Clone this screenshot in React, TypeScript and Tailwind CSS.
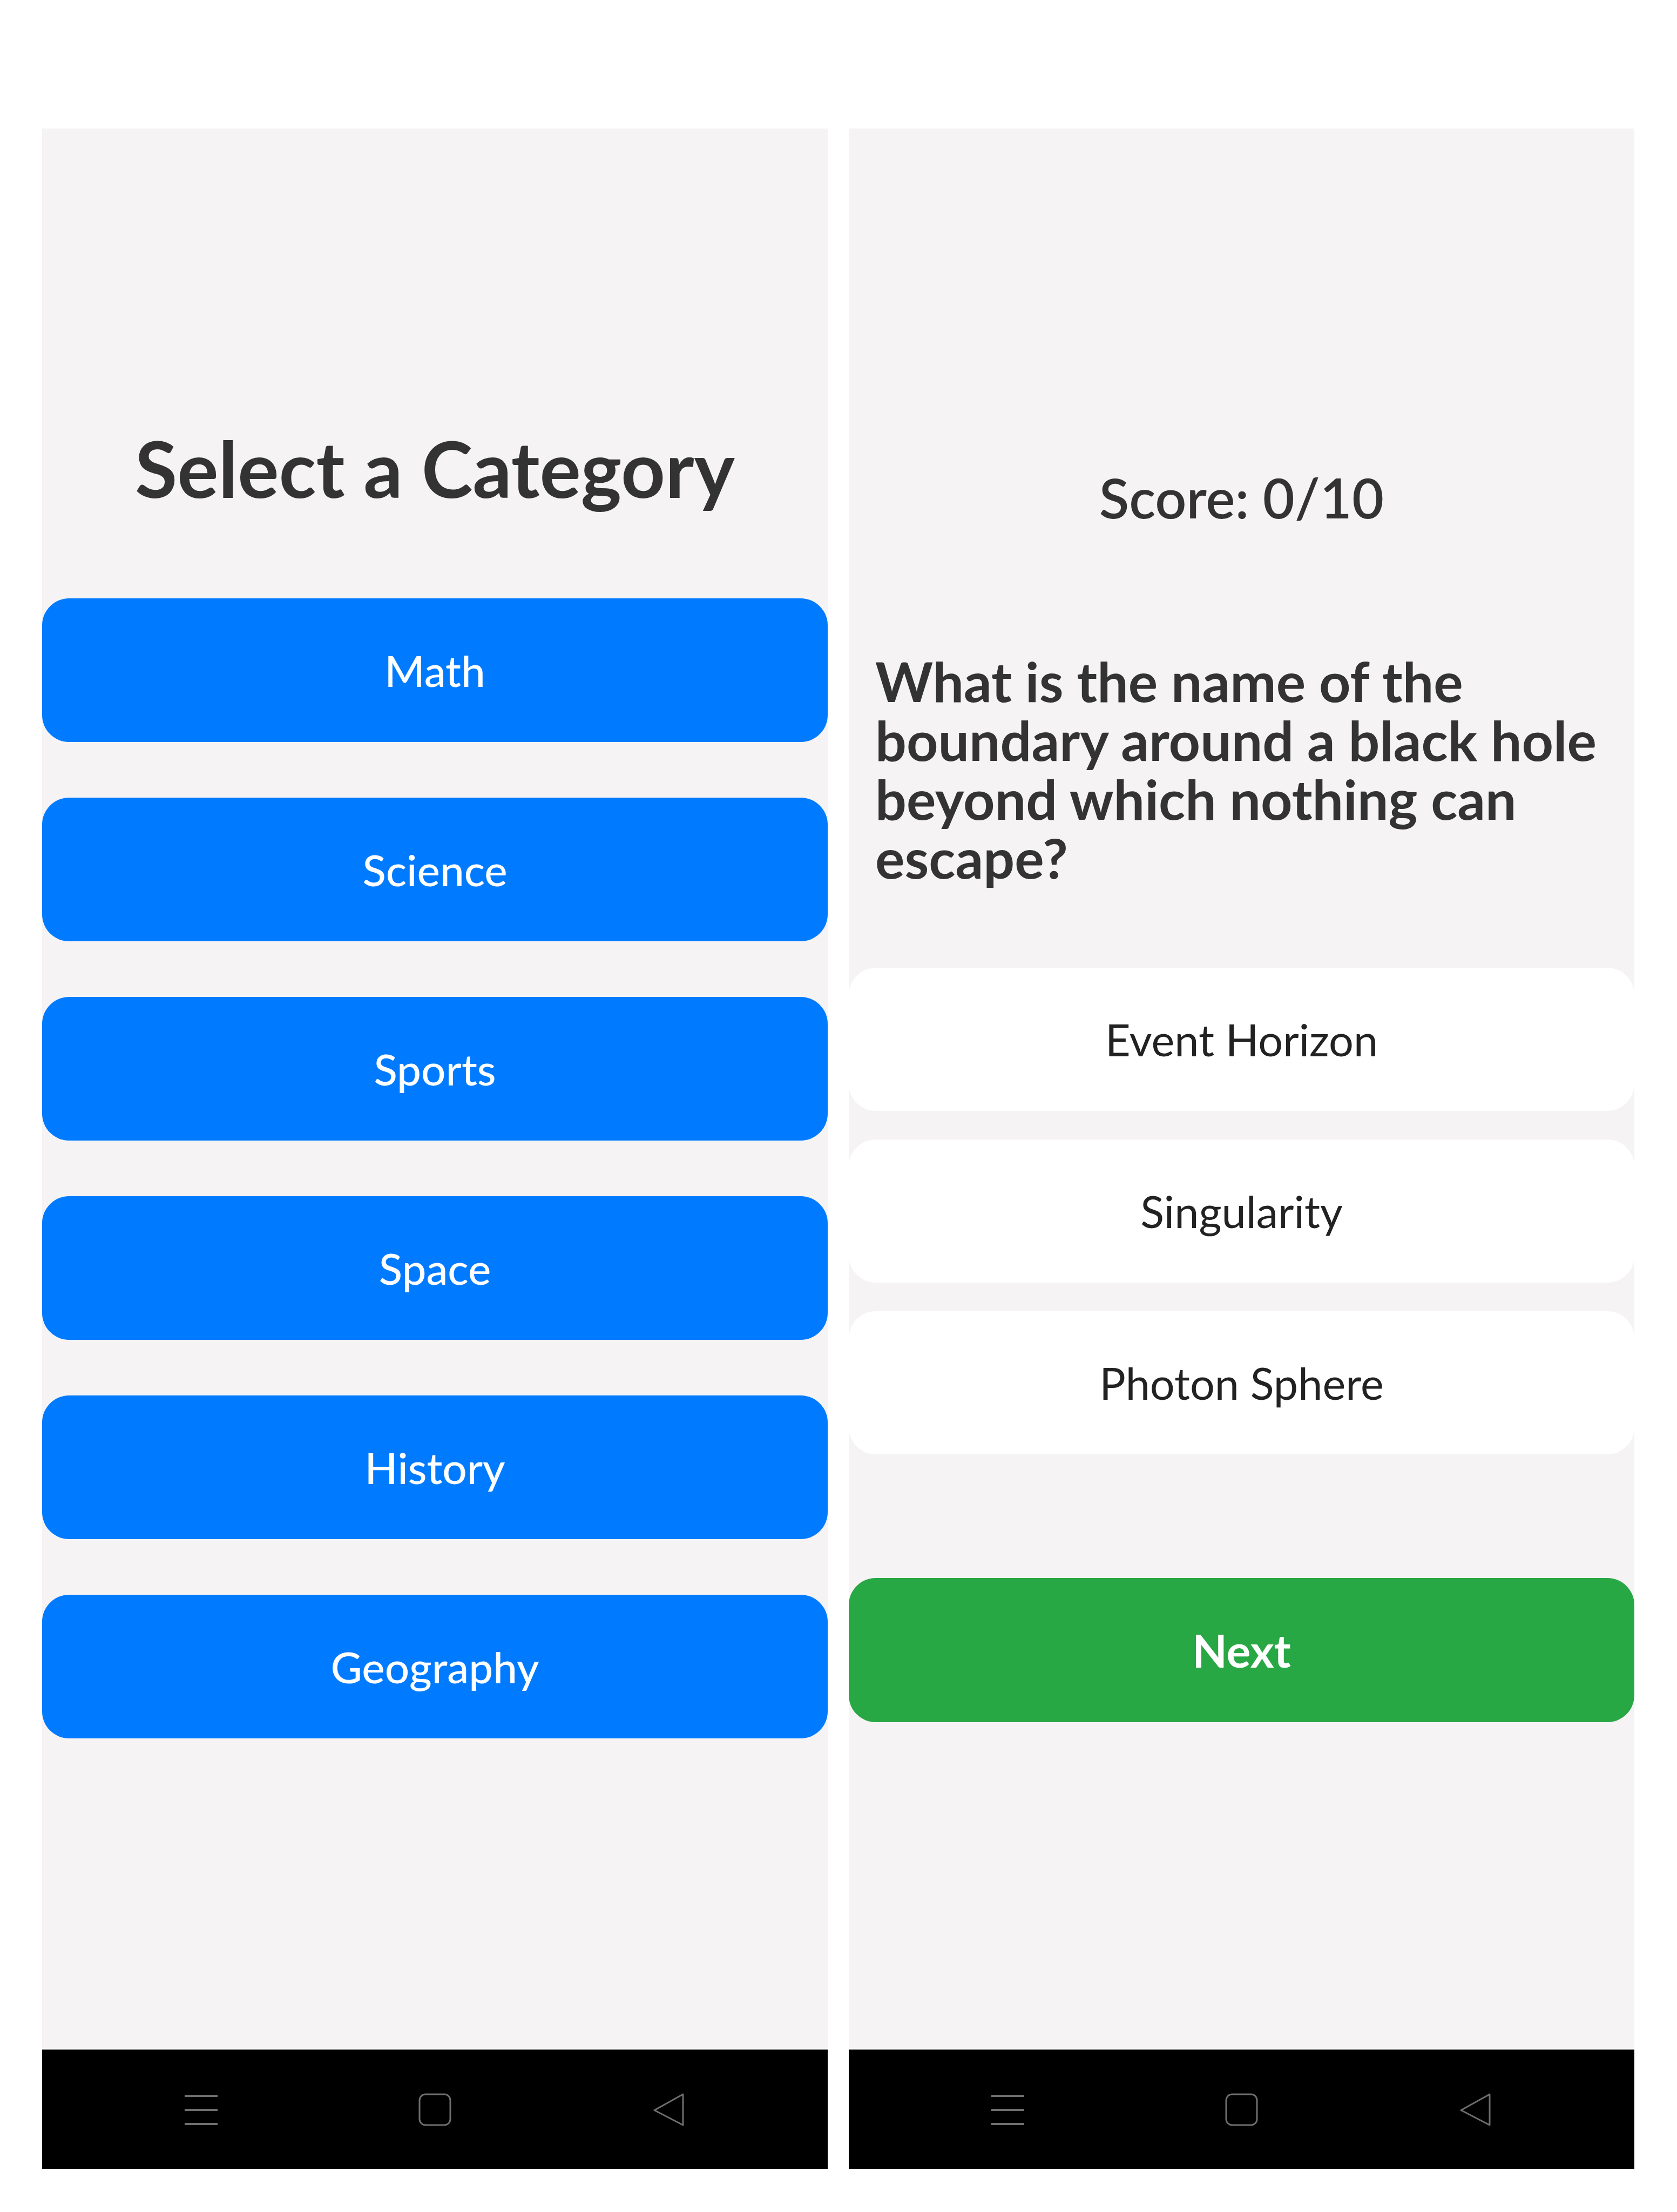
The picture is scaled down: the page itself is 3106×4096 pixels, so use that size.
import React from 'react';

const font = { fontFamily: 'Lato, "Noto Sans", sans-serif' };

const categories = ['Math', 'Science', 'Sports', 'Space', 'History', 'Geography'];
const answers = ['Event Horizon', 'Singularity', 'Photon Sphere'];

// Android-style system navigation bar (menu / home / back)
function NavBar() {
  return (
    <div className="h-[222px] shrink-0 bg-black border-t-[2px] border-[#8a8a8a] flex items-center justify-center gap-[372px]">
      <svg width="61" height="61" viewBox="0 0 61 61" className="text-[#6e6e6e]">
        <rect x="0" y="3" width="61" height="4" fill="currentColor" />
        <rect x="0" y="29" width="61" height="4" fill="currentColor" />
        <rect x="0" y="55" width="61" height="4" fill="currentColor" />
      </svg>
      <svg width="61" height="61" viewBox="0 0 61 61" className="text-[#6e6e6e]">
        <rect x="2" y="2" width="57" height="57" rx="11" fill="none" stroke="currentColor" strokeWidth="3" />
      </svg>
      <svg width="61" height="61" viewBox="0 0 61 61" className="text-[#6e6e6e]">
        <path d="M57 2 L57 59 L4 31.5 Z" fill="none" stroke="currentColor" strokeWidth="3" strokeLinejoin="round" />
      </svg>
    </div>
  );
}

function CategoryScreen() {
  return (
    <div className="w-[1455px] h-[3778px] bg-[#f5f3f4] flex flex-col">
      <h1 className="pt-[557px] text-center text-[143px] leading-[143px] font-bold text-[#333333]">
        Select a Category
      </h1>
      <div className="mt-[170px] flex flex-col gap-[103px]">
        {categories.map((c) => (
          <button
            key={c}
            className="h-[266px] w-full rounded-[50px] bg-[#007bff] text-white text-[80px] font-medium"
          >
            {c}
          </button>
        ))}
      </div>
      <div className="flex-1" />
      <NavBar />
    </div>
  );
}

function QuizScreen() {
  return (
    <div className="w-[1455px] h-[3778px] bg-[#f5f3f4] flex flex-col">
      <div className="pt-[632px] text-center text-[102px] leading-[102px] font-semibold text-[#333333]">
        Score: 0/10
      </div>
      <p className="mt-[234px] pl-[49px] pr-[20px] text-[102px] leading-[109px] font-bold text-[#333333]">
        What is the name of the boundary around a black hole beyond which nothing can escape?
      </p>
      <div className="mt-[150px] flex flex-col gap-[53px]">
        {answers.map((a) => (
          <button
            key={a}
            className="h-[265px] w-full rounded-[50px] bg-white text-[#222222] text-[81px]"
          >
            {a}
          </button>
        ))}
      </div>
      <button className="mt-[229px] h-[267px] w-full rounded-[50px] bg-[#28a745] text-white text-[84px] font-bold">
        Next
      </button>
      <div className="flex-1" />
      <NavBar />
    </div>
  );
}

export default function App() {
  return (
    <div className="min-h-screen bg-white pt-[238px] px-[78px] flex gap-[39px]" style={font}>
      <CategoryScreen />
      <QuizScreen />
    </div>
  );
}
